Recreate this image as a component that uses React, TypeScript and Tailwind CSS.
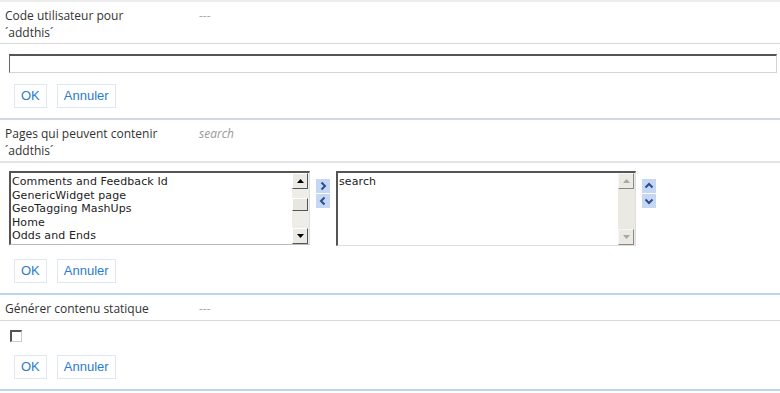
import React from "react";

const label = "font-['Open_Sans',sans-serif] text-[12px] leading-[17px] text-[#333]";
const listFont = "font-['DejaVu_Sans',Verdana,sans-serif] text-[11px] leading-[13.5px] tracking-[0.1px] text-[#222]";

function Buttons() {
  return (
    <div className="flex gap-[10px] pl-[14px]">
      <button className="h-[24px] px-[6px] bg-white border border-[#dfe7f0] text-[#2b7bd4] font-['Liberation_Sans',Arial,sans-serif] text-[13px]">
        OK
      </button>
      <button className="h-[24px] px-[6px] bg-white border border-[#dfe7f0] text-[#2b7bd4] font-['Liberation_Sans',Arial,sans-serif] text-[13px]">
        Annuler
      </button>
    </div>
  );
}

function Header({ lines, value, italic }: { lines: string[]; value: string; italic?: boolean }) {
  return (
    <div className="flex px-[5px] pt-[5px]">
      <div className={`w-[194px] ${label}`}>
        {lines.map((l) => (
          <div key={l}>{l}</div>
        ))}
      </div>
      <div className={`${label} ${italic ? "italic text-[#999]" : "text-[#aaa]"}`}>{value}</div>
    </div>
  );
}

function ScrollBtn({ dir, disabled }: { dir: "up" | "down"; disabled?: boolean }) {
  return (
    <div
      className={`h-[16px] w-[16px] flex items-center justify-center border ${
        disabled
          ? "bg-[#ece9e2] border-t-[#f6f6f6] border-l-[#f6f6f6] border-b-[#888] border-r-[#888]"
          : "bg-[#eceae4] border-t-white border-l-white border-b-[#555] border-r-[#555]"
      }`}
    >
      <svg width="7" height="4" viewBox="0 0 7 4">
        {dir === "up" ? (
          <path d="M3.5 0 L7 4 L0 4 Z" fill={disabled ? "#a8a8a8" : "#000"} />
        ) : (
          <path d="M0 0 L7 0 L3.5 4 Z" fill={disabled ? "#a8a8a8" : "#000"} />
        )}
      </svg>
    </div>
  );
}

function Scrollbar({ disabled }: { disabled?: boolean }) {
  return (
    <div className={`w-[17px] flex flex-col ${disabled ? "bg-[#ebe9e3]" : "bg-[#eeede8]"}`}>
      <ScrollBtn dir="up" disabled={disabled} />
      <div className="flex-1 flex flex-col">
        {!disabled && (
          <div className="mt-[9px] h-[13px] w-[16px] bg-[#e8e6e0] border border-t-white border-l-white border-b-[#555] border-r-[#555]" />
        )}
      </div>
      <ScrollBtn dir="down" disabled={disabled} />
    </div>
  );
}

function ArrowBtn({ d }: { d: string }) {
  return (
    <div className="w-[14px] h-[14px] bg-[#c6d7f5] flex items-center justify-center">
      <svg width="10" height="10" viewBox="0 0 10 10">
        <path d={d} fill="none" stroke="#2d4f86" strokeWidth="2" />
      </svg>
    </div>
  );
}

const pages = [
  "Comments and Feedback Id",
  "GenericWidget page",
  "GeoTagging MashUps",
  "Home",
  "Odds and Ends",
  "Publishing Server Identifiers",
];

export default function App() {
  return (
    <div className="w-[780px] h-[393px] bg-white overflow-hidden">
      {/* Code utilisateur */}
      <div className="border-t-2 border-[#ececec] h-[43px]">
        <Header lines={["Code utilisateur pour", "´addthis´"]} value="---" />
      </div>
      <div className="border-t border-[#dadada] h-[75px] pt-[10px]">
        <div className="ml-[9px] w-[768px] h-[19px] border border-[#d4d4d4] border-t-2 border-t-[#555] border-l-[#666]" />
        <div className="mt-[11px]">
          <Buttons />
        </div>
      </div>

      {/* Pages */}
      <div className="border-t-2 border-[#cbd9e5] h-[43px]">
        <Header lines={["Pages qui peuvent contenir", "´addthis´"]} value="search" italic />
      </div>
      <div className="border-t-2 border-[#e4e4e4] h-[132px] pt-[8px]">
        <div className="flex items-start">
          <div className="ml-[9px] w-[301px] h-[74px] flex border-t-2 border-l-2 border-t-[#555] border-l-[#555] border-b border-r border-b-[#bbb] border-r-[#ddd] overflow-hidden">
            <div className={`flex-1 pl-[1px] pt-[2px] ${listFont} overflow-hidden`}>
              {pages.map((p) => (
                <div key={p} className="whitespace-nowrap">
                  {p}
                </div>
              ))}
            </div>
            <Scrollbar />
          </div>
          <div className="ml-[6px] mt-[8px] flex flex-col gap-[1px]">
            <ArrowBtn d="M3.5 1.5 L7 5 L3.5 8.5" />
            <ArrowBtn d="M6.5 1.5 L3 5 L6.5 8.5" />
          </div>
          <div className="ml-[6px] w-[300px] h-[75px] flex border-t-2 border-l-2 border-t-[#555] border-l-[#555] border-b border-r border-b-[#ddd] border-r-[#ddd] overflow-hidden">
            <div className={`flex-1 pl-[1px] pt-[2px] ${listFont}`}>search</div>
            <Scrollbar disabled />
          </div>
          <div className="ml-[6px] mt-[8px] flex flex-col gap-[1px]">
            <ArrowBtn d="M1.5 6.5 L5 3 L8.5 6.5" />
            <ArrowBtn d="M1.5 3.5 L5 7 L8.5 3.5" />
          </div>
        </div>
        <div className="mt-[13px]">
          <Buttons />
        </div>
      </div>

      {/* Générer */}
      <div className="border-t-2 border-[#bcd5ee] h-[27px]">
        <Header lines={["Générer contenu statique"]} value="---" />
      </div>
      <div className="border-t border-[#dadada] h-[69px] pt-[9px]">
        <div className="ml-[10px] w-[12px] h-[12px] border border-[#ccc] border-t-[#555] border-l-[#555] border-t-2 border-l-2 bg-white" />
        <div className="mt-[13px]">
          <Buttons />
        </div>
      </div>
      <div className="border-t-2 border-[#bcd5ee]" />
    </div>
  );
}
